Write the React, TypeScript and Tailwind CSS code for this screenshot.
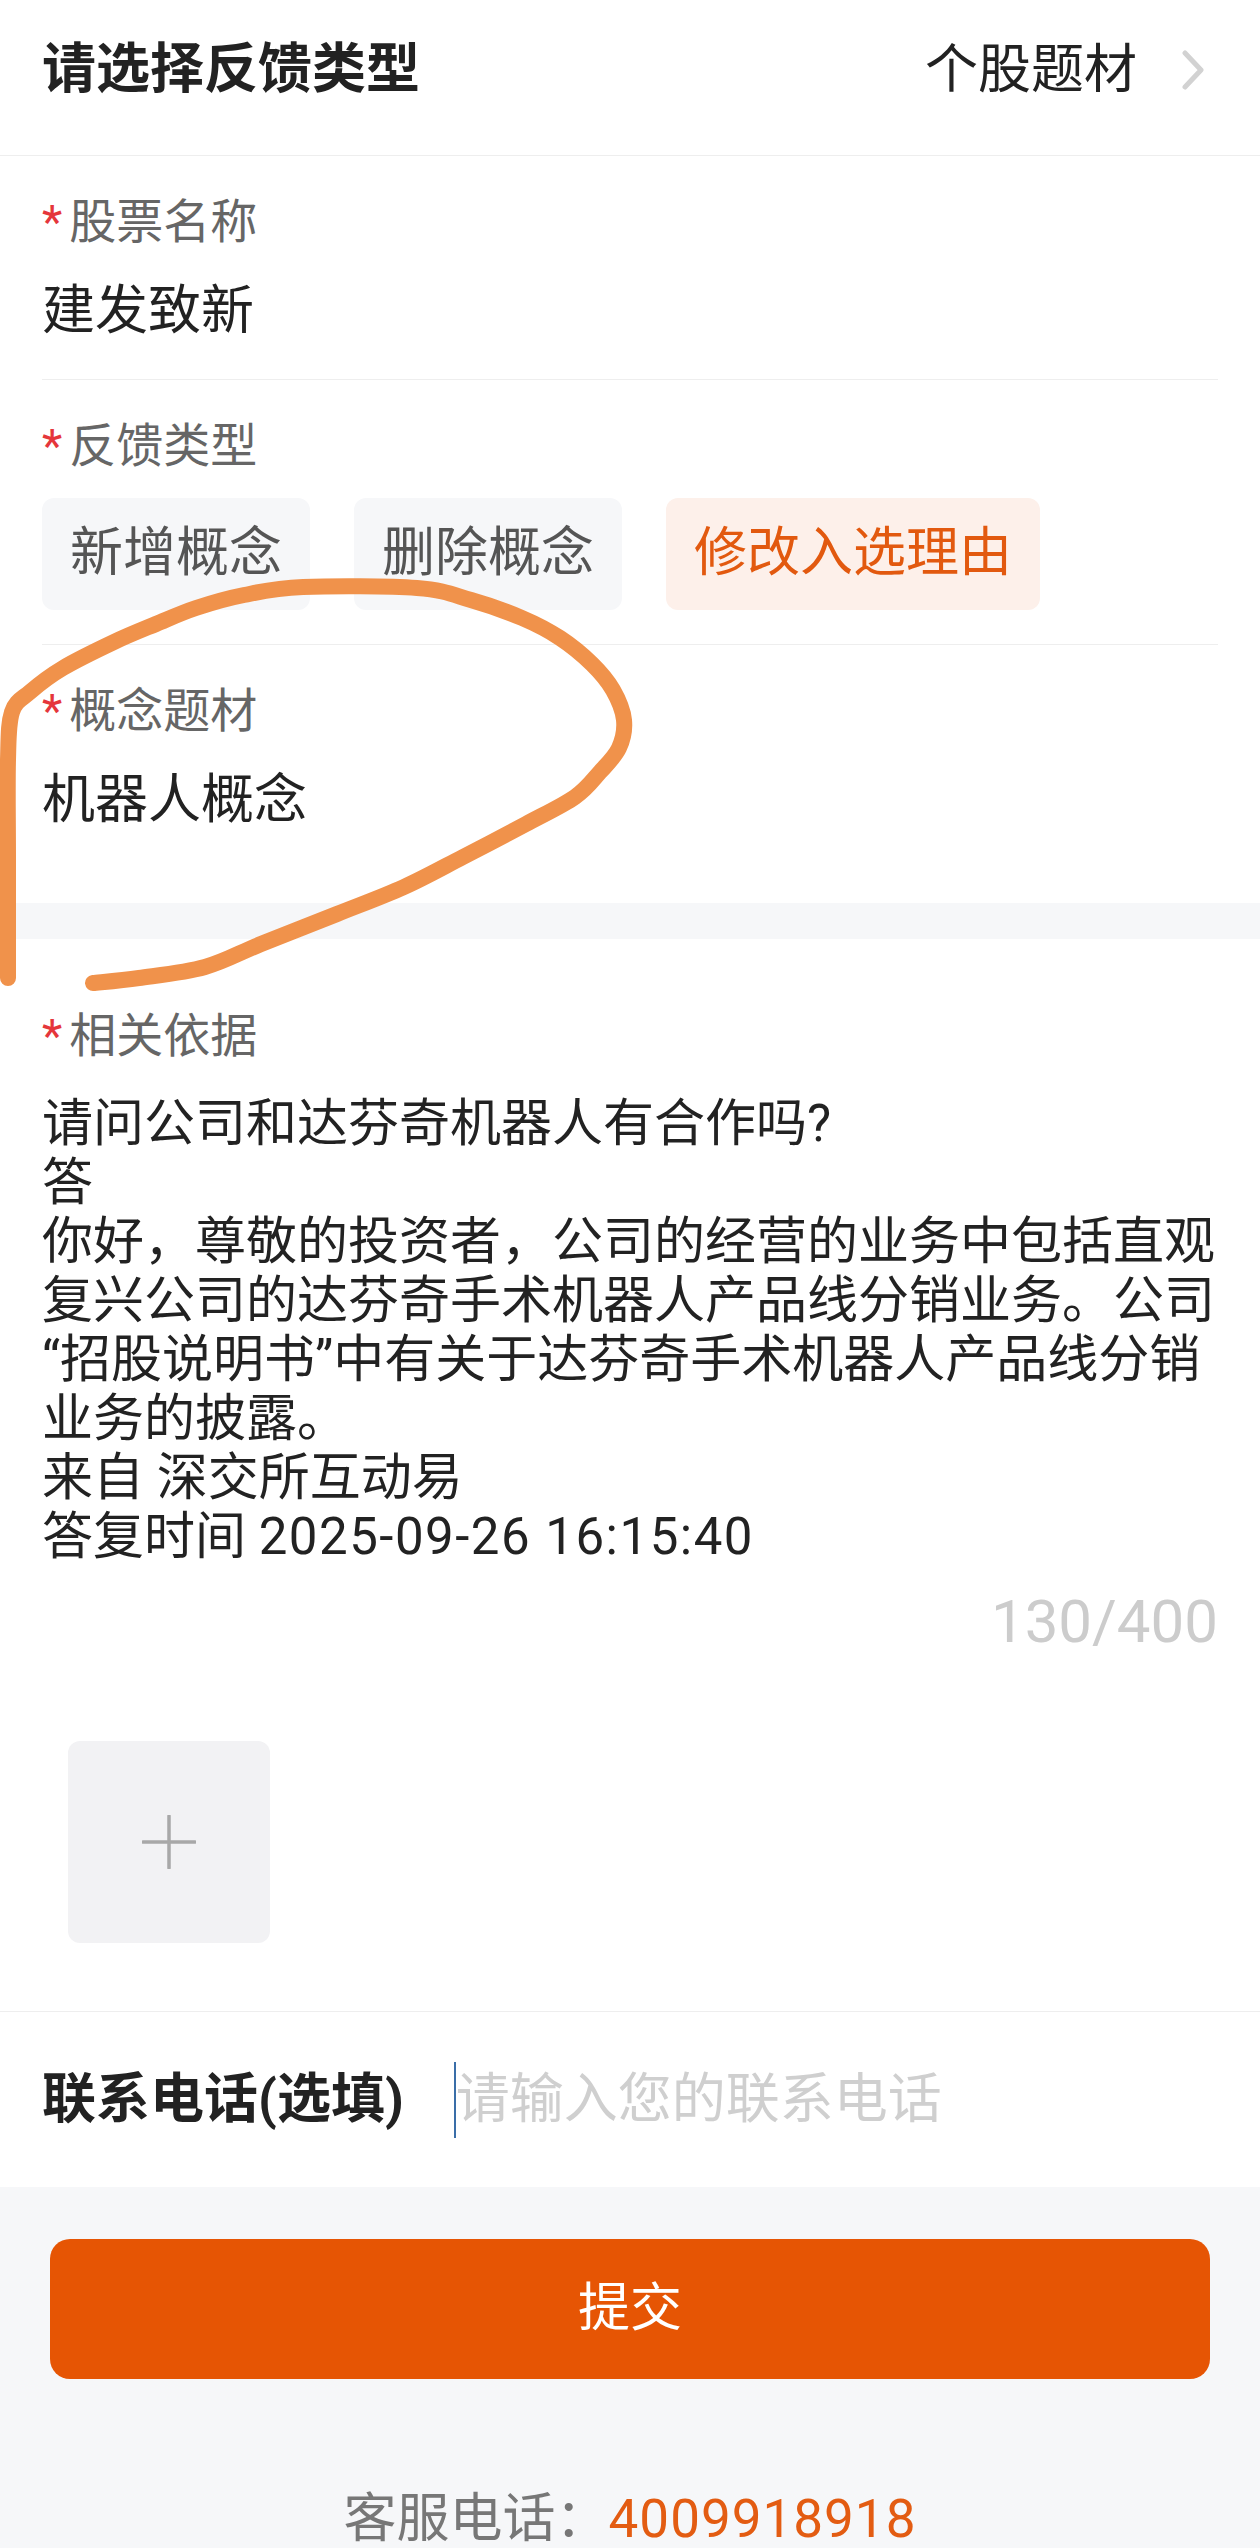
import React from "react";

const answerLines = [
	"请问公司和达芬奇机器人有合作吗?",
	"答",
	"你好，尊敬的投资者，公司的经营的业务中包括直观",
	"复兴公司的达芬奇手术机器人产品线分销业务。公司",
	"“招股说明书”中有关于达芬奇手术机器人产品线分销",
	"业务的披露。",
	"来自 深交所互动易",
];

const chips = [
	{ text: "新增概念", active: false },
	{ text: "删除概念", active: false },
	{ text: "修改入选理由", active: true },
];

// hand-drawn circle points, smoothed into a path
const strokePoints: [number, number][] = [
	[8, 978], [8, 860], [8, 760], [12, 712], [30, 692], [63, 668], [114, 642], [156, 624],
	[196, 608], [244, 595], [303, 587], [417, 588], [471, 600], [522, 618], [560, 638],
	[592, 664], [613, 690], [624, 720], [619, 748], [600, 772], [575, 797], [526, 824],
	[463, 857], [404, 887], [337, 914], [261, 944], [205, 967], [139, 978], [93, 983],
];

const smoothPath = (pts: [number, number][]) => {
	let d = `M${pts[0][0]} ${pts[0][1]}`;
	for (let i = 0; i < pts.length - 1; i++) {
		const p0 = pts[i - 1] || pts[i];
		const p1 = pts[i];
		const p2 = pts[i + 1];
		const p3 = pts[i + 2] || p2;
		const c1x = p1[0] + (p2[0] - p0[0]) / 6;
		const c1y = p1[1] + (p2[1] - p0[1]) / 6;
		const c2x = p2[0] - (p3[0] - p1[0]) / 6;
		const c2y = p2[1] - (p3[1] - p1[1]) / 6;
		d += ` C${c1x} ${c1y} ${c2x} ${c2y} ${p2[0]} ${p2[1]}`;
	}
	return d;
};

const Label = ({ text }: { text: string }) => (
	<div className="flex text-[47px] leading-[60px] text-[#666666]">
		<span className="text-[#e5363b] mr-[7px]">*</span>
		{text}
	</div>
);

const Annotation = () => (
	<svg
		className="absolute left-0 top-0 pointer-events-none"
		width="1260"
		height="1000"
		viewBox="0 0 1260 1000"
		fill="none"
	>
		<path
			d={smoothPath(strokePoints)}
			stroke="#f0924b"
			strokeWidth="16"
			strokeLinecap="round"
			strokeLinejoin="round"
		/>
	</svg>
);

export default function App() {
	return (
		<div className="relative w-full min-h-screen bg-[#f6f7f9] font-['Roboto','Noto_Sans_CJK_SC',sans-serif] text-[#222222]">
			<div className="bg-white">
				{/* header */}
				<div className="flex items-center justify-between h-[156px] pb-[16px] pl-[42px] pr-[55px] border-b border-[#eeeeee]">
					<div className="text-[54px] leading-[60px] font-bold">请选择反馈类型</div>
					<div className="flex items-center">
						<span className="text-[53px] leading-[60px]">个股题材</span>
						<svg className="ml-[44px]" width="24" height="40" viewBox="0 0 24 40" fill="none">
							<path d="M4 3 L20 20 L4 37" stroke="#d2d2d2" strokeWidth="5" strokeLinecap="round" strokeLinejoin="round" />
						</svg>
					</div>
				</div>

				<div className="px-[42px]">
					<div className="pt-[36px] pb-[38px] border-b border-[#eeeeee]">
						<Label text="股票名称" />
						<div className="mt-[29px] text-[53px] leading-[60px]">建发致新</div>
					</div>

					<div className="pt-[36px] pb-[34px] border-b border-[#eeeeee]">
						<Label text="反馈类型" />
						<div className="mt-[22px] flex gap-[44px]">
							{chips.map((c) => (
								<div
									key={c.text}
									className={
										c.active
											? "flex items-center h-[112px] px-[28px] rounded-[12px] bg-[#fdf0ea] text-[#e2590f] text-[53px]"
											: "flex items-center h-[112px] px-[28px] rounded-[12px] bg-[#f6f7f9] text-[#555555] text-[53px]"
									}
								>
									{c.text}
								</div>
							))}
						</div>
					</div>

					<div className="pt-[36px] pb-[73px]">
						<Label text="概念题材" />
						<div className="mt-[29px] text-[53px] leading-[60px]">机器人概念</div>
					</div>
				</div>
			</div>

			<div className="h-[36px]" />

			<div className="bg-white">
				<div className="px-[42px] pt-[67px] pb-[68px]">
					<Label text="相关依据" />
					<div className="mt-[28px] text-[51px] leading-[59px] text-[#222222]">
						{answerLines.map((l) => (
							<div key={l} className="whitespace-nowrap">
								{l}
							</div>
						))}
						<div className="whitespace-nowrap">
							答复时间 <span className="tracking-[1.5px]">2025-09-26 16:15:40</span>
						</div>
					</div>
					<div className="mt-[26px] text-right text-[60px] leading-[60px] text-[#cccccc]">130/400</div>
					<div className="mt-[89px] ml-[26px] w-[202px] h-[202px] rounded-[12px] bg-[#f2f2f4] flex items-center justify-center">
						<svg width="54" height="54" viewBox="0 0 54 54" fill="none">
							<path d="M27 1 V53 M1 27 H53" stroke="#a8a8a8" strokeWidth="3.5" strokeLinecap="round" />
						</svg>
					</div>
				</div>

				<div className="flex items-center h-[176px] px-[42px] border-t border-[#eeeeee]">
					<span className="text-[54px] leading-[60px] font-bold">联系电话(选填)</span>
					<span className="ml-[50px] w-[2px] h-[76px] bg-[#3a6ea8]" />
					<span className="text-[54px] leading-[60px] text-[#cfcfcf]">请输入您的联系电话</span>
				</div>
			</div>

			<div className="px-[50px] pt-[52px]">
				<button className="w-full h-[140px] rounded-[20px] bg-[#e65504] text-white text-[52px]">提交</button>
			</div>

			<div className="mt-[110px] text-center text-[53px] leading-[60px]">
				<span className="text-[#777777]">客服电话：</span>
				<span className="text-[#e35c12] tracking-[1px]">4009918918</span>
			</div>

			<Annotation />
		</div>
	);
}
